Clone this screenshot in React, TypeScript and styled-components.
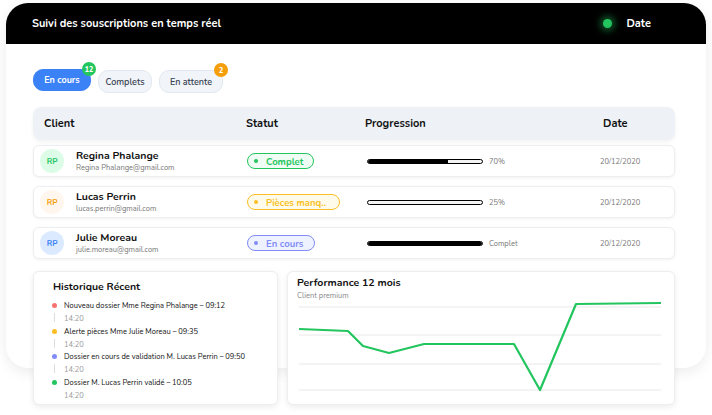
import React from "react";
import styled, { createGlobalStyle } from "styled-components";

const GlobalStyle = createGlobalStyle`
  html, body {
    margin: 0;
    background: #fff;
    font-family: "Nunito", "Lato", "Noto Sans", sans-serif;
    color: #111;
  }
`;

const Page = styled.div`
  padding: 3px 6px 10px 6px;
`;

// the white card stops 37px above the bottom panels, which hang over its edge
const Card = styled.div`
  position: relative;
  isolation: isolate;
  display: flex;
  flex-direction: column;
  &::before {
    content: "";
    position: absolute;
    inset: 0 0 37px 0;
    z-index: -1;
    border-radius: 22px;
    background: #fff;
    box-shadow: 0 4px 14px rgba(0, 0, 0, 0.08);
  }
`;

const Header = styled.div`
  height: 41px;
  flex: 0 0 41px;
  background: #000;
  border-radius: 22px 22px 0 0;
  display: flex;
  align-items: center;
  padding: 0 26px;
  color: #fff;
  font-weight: 700;
  font-size: 11px;
`;

const Title = styled.div`
  flex: 1;
`;

const LiveDot = styled.span`
  width: 9px;
  height: 9px;
  border-radius: 50%;
  background: #22c55e;
  box-shadow: 0 0 7px 3px rgba(34, 197, 94, 0.45);
  margin-right: 14px;
`;

const HeaderDate = styled.span`
  margin-right: 29px;
`;

const Body = styled.div`
  padding: 25px 31px 0 27px;
`;

const Tabs = styled.div`
  display: flex;
  gap: 7px;
  align-items: flex-start;
`;

const Tab = styled.div<{ $active?: boolean; $w: number }>`
  position: relative;
  width: ${(p) => p.$w}px;
  height: ${(p) => (p.$active ? 22 : 23)}px;
  box-sizing: border-box;
  border-radius: 10px;
  display: flex;
  align-items: center;
  justify-content: center;
  font-size: 9px;
  font-weight: ${(p) => (p.$active ? 700 : 600)};
  margin-top: ${(p) => (p.$active ? 0 : 1)}px;
  background: ${(p) => (p.$active ? "#3b82f6" : "#f1f5f9")};
  color: ${(p) => (p.$active ? "#fff" : "#374151")};
  border: 1px solid ${(p) => (p.$active ? "#3b82f6" : "#e2e8f0")};
`;

const Badge = styled.span<{ $color: string }>`
  position: absolute;
  top: -8px;
  right: -6px;
  width: 14px;
  height: 14px;
  border-radius: 50%;
  background: ${(p) => p.$color};
  color: #fff;
  font-size: 7px;
  font-weight: 800;
  display: flex;
  align-items: center;
  justify-content: center;
`;

const cols = "213px 119px 234px 1fr";

const TableHead = styled.div`
  margin-top: 14px;
  height: 33px;
  display: grid;
  grid-template-columns: ${cols};
  align-items: center;
  background: #eef2f7;
  border-radius: 8px;
  box-shadow: 0 2px 4px rgba(0, 0, 0, 0.05);
  font-size: 11px;
  font-weight: 700;
`;

const HeadCell = styled.div<{ $pad?: number }>`
  padding-left: ${(p) => p.$pad ?? 0}px;
`;

const Rows = styled.div`
  margin-top: 5px;
  display: flex;
  flex-direction: column;
  gap: 9px;
`;

const Row = styled.div`
  height: 32px;
  display: grid;
  grid-template-columns: ${cols};
  align-items: center;
  background: #fff;
  border: 1px solid #eceef1;
  border-radius: 6px;
  box-shadow: 0 1px 3px rgba(0, 0, 0, 0.06);
  box-sizing: border-box;
`;

const ClientCell = styled.div`
  display: flex;
  align-items: center;
  padding-left: 6px;
`;

const Avatar = styled.div<{ $bg: string; $fg: string }>`
  width: 24px;
  height: 24px;
  border-radius: 50%;
  background: ${(p) => p.$bg};
  color: ${(p) => p.$fg};
  font-size: 8px;
  font-weight: 700;
  display: flex;
  align-items: center;
  justify-content: center;
  margin-right: 12px;
`;

const Name = styled.div`
  font-size: 10.5px;
  font-weight: 700;
  line-height: 12px;
`;

const Email = styled.div`
  font-size: 7.5px;
  color: #777;
  line-height: 11px;
`;

const Pill = styled.div<{ $c: string; $bg: string; $w: number }>`
  width: ${(p) => p.$w}px;
  height: 16px;
  box-sizing: border-box;
  border: 1px solid ${(p) => p.$c};
  background: ${(p) => p.$bg};
  color: ${(p) => p.$c};
  border-radius: 8px;
  display: flex;
  align-items: center;
  padding-left: 6px;
  font-size: 9.5px;
  font-weight: 700;
  &::before {
    content: "";
    width: 4px;
    height: 4px;
    border-radius: 50%;
    background: ${(p) => p.$c};
    margin-right: 8px;
  }
`;

const ProgressCell = styled.div`
  display: flex;
  align-items: center;
  padding-left: 1px;
`;

const Bar = styled.div`
  width: 116px;
  height: 5px;
  box-sizing: border-box;
  border: 1px solid #000;
  border-radius: 3px;
  background: #f3f3f3;
  overflow: hidden;
`;

const Fill = styled.div`
  height: 100%;
  background: #000;
`;

const SmallGray = styled.span`
  font-size: 7.5px;
  color: #777;
  margin-left: 6px;
`;

const DateCell = styled.div`
  font-size: 7.5px;
  color: #777;
`;

const Bottom = styled.div`
  margin-top: 12px;
  display: grid;
  grid-template-columns: 245px 388px;
  gap: 9px;
`;

const Panel = styled.div`
  height: 134px;
  background: #fff;
  border: 1px solid #eceef1;
  border-radius: 6px;
  box-shadow: 0 2px 6px rgba(0, 0, 0, 0.08);
  box-sizing: border-box;
`;

const HistPanel = styled(Panel)`
  padding: 7px 10px 0 19px;
`;

const PanelTitle = styled.div`
  font-size: 10.5px;
  font-weight: 700;
`;

const Timeline = styled.div`
  margin-top: 6px;
`;

const Event = styled.div<{ $dot: string; $last?: boolean }>`
  position: relative;
  padding-left: 11px;
  height: ${(p) => (p.$last ? 24 : 25.5)}px;
  &::before {
    content: "";
    position: absolute;
    left: -1px;
    top: 3px;
    width: 5px;
    height: 5px;
    border-radius: 50%;
    background: ${(p) => p.$dot};
  }
  &::after {
    content: "";
    display: ${(p) => (p.$last ? "none" : "block")};
    position: absolute;
    left: 1px;
    top: 13px;
    width: 1px;
    height: 9px;
    background: #ddd;
  }
`;

const EventText = styled.div`
  font-size: 7.5px;
  line-height: 11px;
`;

const EventTime = styled.div`
  font-size: 7.5px;
  color: #999;
  line-height: 13px;
  margin-top: 1px;
`;

const PerfPanel = styled(Panel)`
  padding: 3px 10px 0 9px;
`;

const Sub = styled.div`
  font-size: 7.5px;
  color: #888;
`;

const Chart = styled.svg`
  display: block;
  margin-left: 2px;
`;

const clients = [
  {
    name: "Regina Phalange",
    email: "Regina Phalange@gmail.com",
    avBg: "#dcfce7",
    avFg: "#22c55e",
    status: "Complet",
    c: "#22c55e",
    bg: "#f0fdf4",
    w: 67,
    progress: 70,
    label: "70%",
  },
  {
    name: "Lucas Perrin",
    email: "lucas.perrin@gmail.com",
    avBg: "#fff7ed",
    avFg: "#f59e0b",
    status: "Pièces manq..",
    c: "#fbbf24",
    bg: "#fffbeb",
    w: 93,
    progress: 0,
    label: "25%",
  },
  {
    name: "Julie Moreau",
    email: "julie.moreau@gmail.com",
    avBg: "#dbeafe",
    avFg: "#3b82f6",
    status: "En cours",
    c: "#818cf8",
    bg: "#eef2ff",
    w: 68,
    progress: 100,
    label: "Complet",
  },
];

const events = [
  { text: "Nouveau dossier Mme Regina Phalange – 09:12", dot: "#f87171" },
  { text: "Alerte pièces Mme Julie Moreau – 09:35", dot: "#fbbf24" },
  { text: "Dossier en cours de validation M. Lucas Perrin – 09:50", dot: "#818cf8" },
  { text: "Dossier M. Lucas Perrin validé – 10:05", dot: "#22c55e" },
];

const points = [
  [0, 26],
  [49, 28],
  [64, 43],
  [90, 50],
  [125, 41],
  [215, 41],
  [241, 87],
  [277, 1],
  [362, 0],
];

const App: React.FC = () => {
  return (
    <>
      <GlobalStyle />
      <Page>
        <Card>
          <Header>
            <Title>Suivi des souscriptions en temps réel</Title>
            <LiveDot />
            <HeaderDate>Date</HeaderDate>
          </Header>
          <Body>
            <Tabs>
              <Tab $active $w={58}>
                En cours
                <Badge $color="#22c55e">12</Badge>
              </Tab>
              <Tab $w={54}>Complets</Tab>
              <Tab $w={64}>
                En attente
                <Badge $color="#f59e0b">2</Badge>
              </Tab>
            </Tabs>

            <TableHead>
              <HeadCell $pad={11}>Client</HeadCell>
              <HeadCell>Statut</HeadCell>
              <HeadCell>Progression</HeadCell>
              <HeadCell $pad={4}>Date</HeadCell>
            </TableHead>

            <Rows>
              {clients.map((c) => (
                <Row key={c.name}>
                  <ClientCell>
                    <Avatar $bg={c.avBg} $fg={c.avFg}>
                      RP
                    </Avatar>
                    <div>
                      <Name>{c.name}</Name>
                      <Email>{c.email}</Email>
                    </div>
                  </ClientCell>
                  <div>
                    <Pill $c={c.c} $bg={c.bg} $w={c.w}>
                      {c.status}
                    </Pill>
                  </div>
                  <ProgressCell>
                    <Bar>
                      <Fill style={{ width: `${c.progress}%` }} />
                    </Bar>
                    <SmallGray>{c.label}</SmallGray>
                  </ProgressCell>
                  <DateCell>20/12/2020</DateCell>
                </Row>
              ))}
            </Rows>

            <Bottom>
              <HistPanel>
                <PanelTitle>Historique Récent</PanelTitle>
                <Timeline>
                  {events.map((e, i) => (
                    <Event key={i} $dot={e.dot} $last={i === events.length - 1}>
                      <EventText>{e.text}</EventText>
                      <EventTime>14:20</EventTime>
                    </Event>
                  ))}
                </Timeline>
              </HistPanel>
              <PerfPanel>
                <PanelTitle>Performance 12 mois</PanelTitle>
                <Sub>Client premium</Sub>
                <Chart width="364" height="92" viewBox="0 -2 364 92">
                  {[4, 32, 61, 87].map((y) => (
                    <line key={y} x1="0" x2="362" y1={y} y2={y} stroke="#e8e8e8" strokeWidth="1" />
                  ))}
                  <polyline
                    points={points.map((p) => p.join(",")).join(" ")}
                    fill="none"
                    stroke="#22c55e"
                    strokeWidth="2.2"
                    strokeLinejoin="round"
                  />
                </Chart>
              </PerfPanel>
            </Bottom>
          </Body>
        </Card>
      </Page>
    </>
  );
};

export default App;
